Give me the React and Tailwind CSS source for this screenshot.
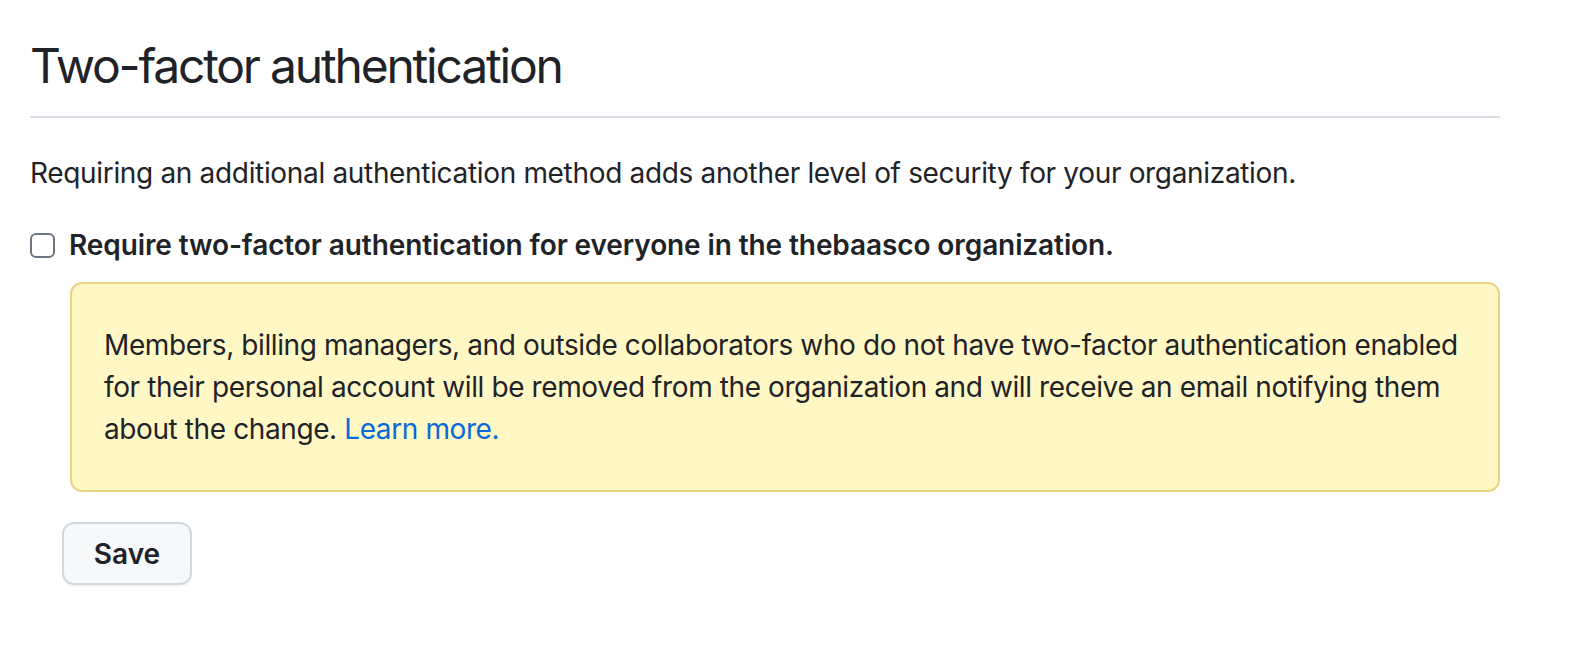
export default function App() {
  return (
    <div className="min-h-[654px] bg-white text-[#1f2328] font-['Inter','Liberation_Sans',sans-serif]">
      <div className="w-[1470px] ml-[30px] pt-[30px]">
        <div className="border-b-2 border-[#d8dee4] pb-[14px]">
          <h1 className="text-[48px] leading-[72px] font-normal tracking-[-2.2px]">Two-factor authentication</h1>
        </div>

        <p className="mt-[34px] text-[28px] leading-[42px] tracking-[-0.33px]">
          Requiring an additional authentication method adds another level of security for your organization.
        </p>

        <label className="mt-[30px] flex items-center gap-[14px]">
          <span className="w-[25px] h-[25px] rounded-[6px] border-2 border-[#6e7781] bg-white shrink-0"></span>
          <span className="text-[28px] leading-[42px] font-semibold tracking-[-0.1px]">
            Require two-factor authentication for everyone in the thebaasco organization.
          </span>
        </label>

        <div className="ml-[40px] mt-[16px] rounded-[12px] border-2 border-[#ebd384] bg-[#fff8c5] px-[32px] py-[40px]">
          <p className="text-[28px] leading-[42px] tracking-[-0.4px]">
            Members, billing managers, and outside collaborators who do not have two-factor authentication enabled
            for their personal account will be removed from the organization and will receive an email notifying them
            about the change. <a href="#" className="text-[#0969da]">Learn more.</a>
          </p>
        </div>

        <button className="ml-[32px] mt-[30px] w-[130px] h-[63px] rounded-[12px] border-2 border-[#d1d9e0] bg-[#f6f8fa] text-[28px] font-semibold shadow-[0_2px_0_rgba(31,35,40,0.04)]">
          Save
        </button>
      </div>
    </div>
  );
}
